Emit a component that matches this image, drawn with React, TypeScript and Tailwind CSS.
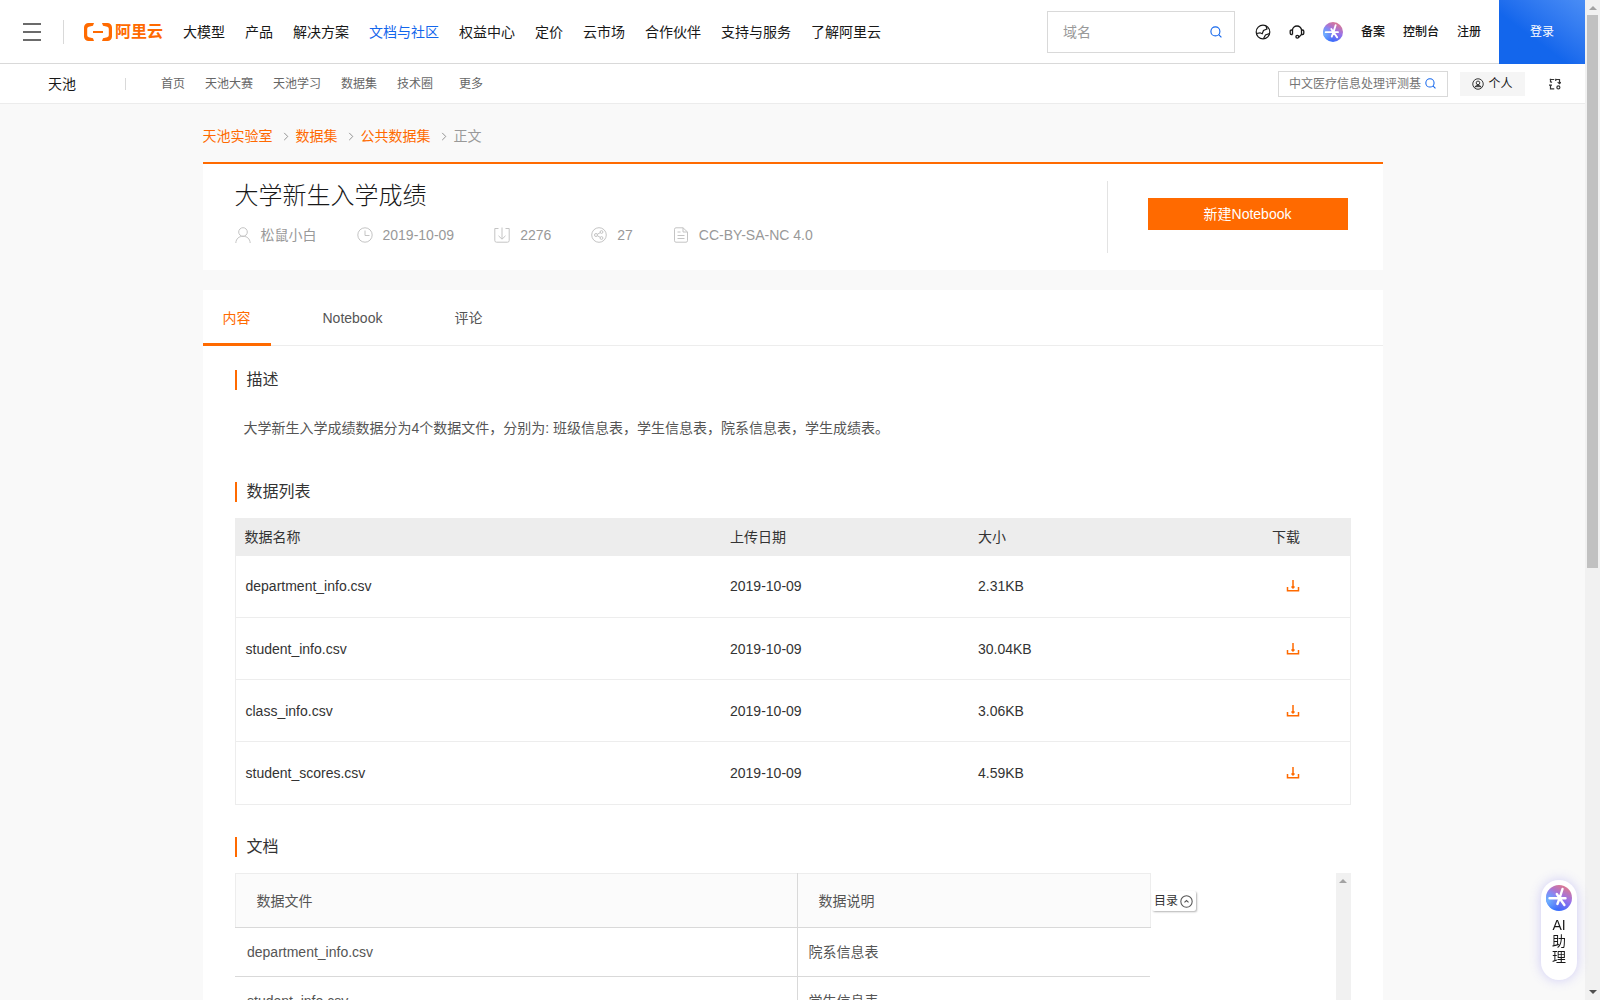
import type { ReactNode, SVGProps } from "react";

interface DataFile {
  name: string;
  date: string;
  size: string;
}

const mainLinks = [
  "大模型",
  "产品",
  "解决方案",
  "文档与社区",
  "权益中心",
  "定价",
  "云市场",
  "合作伙伴",
  "支持与服务",
  "了解阿里云",
];

const subLinks = ["首页", "天池大赛", "天池学习", "数据集", "技术圈"];

const crumbs = ["天池实验室", "数据集", "公共数据集"];

const files: DataFile[] = [
  { name: "department_info.csv", date: "2019-10-09", size: "2.31KB" },
  { name: "student_info.csv", date: "2019-10-09", size: "30.04KB" },
  { name: "class_info.csv", date: "2019-10-09", size: "3.06KB" },
  { name: "student_scores.csv", date: "2019-10-09", size: "4.59KB" },
];

const docs = [
  { file: "department_info.csv", desc: "院系信息表" },
  { file: "student_info.csv", desc: "学生信息表" },
];

function Icon({ children, ...props }: SVGProps<SVGSVGElement>) {
  return (
    <svg
      viewBox="0 0 16 16"
      fill="none"
      stroke="currentColor"
      aria-hidden="true"
      {...props}
    >
      {children}
    </svg>
  );
}

function SearchIcon({ className }: { className: string }) {
  return (
    <Icon className={className} strokeWidth="1.5">
      <circle cx="7.2" cy="7.2" r="6" />
      <path d="M11.6 11.6 15.2 15.2" />
    </Icon>
  );
}

function AiIcon({ id, className }: { id: string; className: string }) {
  return (
    <svg viewBox="0 0 26 26" className={className} aria-hidden="true">
      <defs>
        <linearGradient id={id} x1="0.8" y1="0.05" x2="0.35" y2="1">
          <stop offset="0" stopColor="#e0788a" />
          <stop offset="0.45" stopColor="#9a72e8" />
          <stop offset="1" stopColor="#2b6bff" />
        </linearGradient>
        <radialGradient id={`${id}-glow`} cx="0.05" cy="0.6" r="0.5">
          <stop offset="0" stopColor="#6fb4ff" />
          <stop offset="1" stopColor="#6fb4ff" stopOpacity="0" />
        </radialGradient>
      </defs>
      <circle cx="13" cy="13" r="13" fill={`url(#${id})`} />
      <circle cx="13" cy="13" r="13" fill={`url(#${id}-glow)`} />
      <path
        d="M3.5 13.2H19.5M16.5 4 13.6 13.2 18.4 20M13.6 13.2 10.8 9M13.6 13.2 11.4 19"
        fill="none"
        stroke="#fff"
        strokeWidth="2.4"
        strokeLinecap="round"
      />
    </svg>
  );
}

function Logo() {
  return (
    <a
      href="#home"
      className="flex items-center gap-[3px] text-base leading-5 font-bold text-[#ff6a00]"
    >
      <svg viewBox="0 0 28 18" className="h-[18px] w-7" aria-hidden="true">
        <path
          d="M10 0H4.5A4.5 4.5 0 0 0 0 4.5v9A4.5 4.5 0 0 0 4.5 18H10L9 15.2 4.8 14.2A2 2 0 0 1 3.2 12.3V5.7A2 2 0 0 1 4.8 3.8L9 2.8ZM18 0h5.5A4.5 4.5 0 0 1 28 4.5v9a4.5 4.5 0 0 1-4.5 4.5H18l1-2.8 4.2-1a2 2 0 0 0 1.6-1.9V5.7a2 2 0 0 0-1.6-1.9L19 2.8ZM9 8h10v2H9Z"
          fill="currentColor"
        />
      </svg>
      阿里云
    </a>
  );
}

function TopBar() {
  return (
    <header className="flex h-16 items-center border-b border-[#d9d9d9] bg-white pl-[23px] whitespace-nowrap text-[#181818]">
      <button
        type="button"
        aria-label="菜单"
        className="flex w-[18px] flex-col gap-1.5 text-[#6b6b6b]"
      >
        <span className="h-0.5 bg-current" />
        <span className="h-0.5 bg-current" />
        <span className="h-0.5 bg-current" />
      </button>
      <span className="mr-5 ml-[22px] h-6 w-px bg-[#d9d9d9]" />
      <Logo />
      <nav className="ml-5 flex gap-5 text-sm leading-5">
        {mainLinks.map((link) => (
          <a
            key={link}
            href="#nav"
            className={link === "文档与社区" ? "text-[#1366ec]" : ""}
          >
            {link}
          </a>
        ))}
      </nav>
      <label className="mt-px ml-auto flex h-[42px] w-[188px] items-center border border-[#d9d9d9] pr-3 pl-[15px]">
        <input
          aria-label="搜索"
          placeholder="域名"
          className="min-w-0 flex-1 text-sm leading-5 outline-none placeholder:text-[#999]"
        />
        <SearchIcon className="size-3 text-[#1366ec]" />
      </label>
      <div className="ml-5 flex h-full items-center text-xs leading-4 font-medium">
        <a href="#lang" aria-label="语言">
          <Icon className="size-4" strokeWidth="1.2">
            <circle cx="8" cy="8" r="6.8" />
            <path d="M1.5 9.5 5 8.8 7.2 9.8 8.5 6.5 12 5 11 2M8.5 14.5 10.5 11 14.5 9.5" />
          </Icon>
        </a>
        <a href="#support" aria-label="支持" className="ml-[18px]">
          <Icon className="size-4" strokeWidth="1.3">
            <path d="M3.5 10.5V6.2A4.5 4.2 0 0 1 12.5 6.2V10.5L9.5 13.5M3.5 6H2.5Q1.2 6 1.2 7.2V9.3Q1.2 10.5 2.5 10.5H3.5M12.5 6H13.5Q14.8 6 14.8 7.2V9.3Q14.8 10.5 13.5 10.5H12.5" />
            <circle cx="8.3" cy="12.8" r="1.4" />
          </Icon>
        </a>
        <a href="#ai" aria-label="AI" className="ml-[18px]">
          <AiIcon id="ai-top" className="size-5" />
        </a>
        <a href="#beian" className="ml-[18px]">
          备案
        </a>
        <a href="#console" className="ml-[18px]">
          控制台
        </a>
        <a href="#register" className="ml-[18px]">
          注册
        </a>
        <a
          href="#login"
          className="-mb-px ml-[18px] flex h-16 w-[86px] items-center justify-center bg-linear-to-tr from-[#1366ec] from-40% to-[#4a8df5] font-normal text-white"
        >
          登录
        </a>
      </div>
    </header>
  );
}

function SubBar() {
  return (
    <div className="flex h-10 items-center border-b border-[#ececec] bg-white pr-6 pl-12 text-xs leading-4 whitespace-nowrap text-[#666]">
      <a href="#tianchi" className="text-sm leading-5 text-[#181818]">
        天池
      </a>
      <span className="mr-[35px] ml-[49px] h-3 w-px bg-[#d9d9d9]" />
      <nav className="flex gap-5">
        {subLinks.map((link) => (
          <a key={link} href="#sub">
            {link}
          </a>
        ))}
        <a href="#more" className="ml-1.5">
          更多
        </a>
      </nav>
      <label className="ml-auto flex h-[26px] w-[170px] items-center gap-1 border border-[#d9d9d9] pr-[11px] pl-2.5">
        <input
          aria-label="站内搜索"
          placeholder="中文医疗信息处理评测基准"
          className="min-w-0 flex-1 outline-none placeholder:text-[#757575]"
        />
        <SearchIcon className="size-[11px] text-[#1366ec]" />
      </label>
      <button
        type="button"
        className="ml-3 flex h-6 w-[65px] items-center justify-center gap-1 bg-[#f5f5f5] text-[#181818]"
      >
        <Icon className="size-3 text-[#333]" strokeWidth="1.3">
          <circle cx="8" cy="8" r="7" />
          <circle cx="8" cy="6.5" r="2.4" />
          <path d="M3.5 13Q4 9.8 8 9.8T12.5 13M4 11.5H12" />
        </Icon>
        个人
      </button>
      <button type="button" aria-label="切换" className="ml-6">
        <Icon className="size-3 text-[#333]" strokeWidth="1.6">
          <path d="M2 1V6M1 2H7M2 9V14.500H7M0 9.500H4M9 2H14V7M11.500 5.500 14 7.500 16 5.500M9 1V4M4 6 2 4.500" />
          <circle cx="12.5" cy="12.5" r="2" />
        </Icon>
      </button>
    </div>
  );
}

function Breadcrumb() {
  return (
    <nav className="flex h-[58px] items-center pt-1.5 text-sm leading-5 text-[#ff6a00]">
      {crumbs.map((crumb) => (
        <span key={crumb} className="flex items-center">
          <a href="#crumb">{crumb}</a>
          <Icon
            viewBox="0 0 6 10"
            className="mr-[7px] ml-2.5 h-[9px] w-1.5 text-[#888]"
          >
            <path d="M1 1 5 5 1 9" />
          </Icon>
        </span>
      ))}
      <span className="text-[#999]">正文</span>
    </nav>
  );
}

function Meta({ icon, children }: { icon: ReactNode; children: ReactNode }) {
  return (
    <li className="flex items-center gap-2.5">
      <Icon className="size-4 text-[#c4c4c4]">{icon}</Icon>
      {children}
    </li>
  );
}

function Summary() {
  return (
    <section className="flex items-start border-t-2 border-[#ff6a00] bg-white px-8 py-[17px]">
      <div className="flex-1">
        <h1 className="text-2xl leading-[30px] font-light text-[#181818]">
          大学新生入学成绩
        </h1>
        <ul className="mt-3.5 flex gap-10 text-sm leading-5 text-[#999]">
          <Meta
            icon={
              <>
                <circle cx="8" cy="5" r="4.3" />
                <path d="M.8 16C1.2 11.5 4 9.3 8 9.3S14.8 11.5 15.2 16" />
              </>
            }
          >
            松鼠小白
          </Meta>
          <Meta
            icon={
              <>
                <circle cx="8" cy="8" r="7.2" />
                <path d="M8 3.5V8.5H12.5" />
              </>
            }
          >
            2019-10-09
          </Meta>
          <Meta
            icon={
              <path d="M4.5 1.5H.8V13.5Q.8 15.2 2.5 15.2H13.5Q15.2 15.2 15.2 13.5V1.5H11.5M8 .5V12M4.5 8.8 8 12.2 11.5 8.8" />
            }
          >
            2276
          </Meta>
          <Meta
            icon={
              <>
                <circle cx="8" cy="8" r="7.3" />
                <circle cx="5" cy="8" r="1.5" />
                <circle cx="10.5" cy="5" r="1.4" />
                <circle cx="10.5" cy="11" r="1.4" />
                <path d="M6.3 7.3 9.3 5.6M6.3 8.7 9.3 10.4" />
              </>
            }
          >
            27
          </Meta>
          <Meta
            icon={
              <path d="M10 .8H3Q1.5.8 1.5 2.3V13.7Q1.5 15.2 3 15.2H13Q14.5 15.2 14.5 13.7V5ZM10 .8V5H14.5M4.5 5H7.5M4.5 8.5H11.5M4.5 11.5H11.5" />
            }
          >
            CC-BY-SA-NC 4.0
          </Meta>
        </ul>
      </div>
      <div className="flex h-[72px] items-start border-l border-[#e3e3e3] pt-[17px] pr-[3px] pl-10">
        <button
          type="button"
          className="h-8 w-[200px] bg-[#ff6a00] text-sm leading-5 text-white"
        >
          新建Notebook
        </button>
      </div>
    </section>
  );
}

function SectionTitle({ children }: { children: ReactNode }) {
  return (
    <h2 className="border-l-2 border-[#ff6a00] pl-2.5 text-base leading-5 text-[#333]">
      {children}
    </h2>
  );
}

function FileTable() {
  return (
    <table className="mt-4 w-full table-fixed border border-[#ededed] text-left text-sm leading-5 text-[#333]">
      <colgroup>
        <col className="w-[485px]" />
        <col className="w-[248px]" />
        <col />
        <col className="w-[87px]" />
      </colgroup>
      <thead>
        <tr className="h-[37px] bg-[#ededed]">
          <th className="pl-[9px] font-normal">数据名称</th>
          <th className="pl-2.5 font-normal">上传日期</th>
          <th className="pl-2.5 font-normal">大小</th>
          <th className="pl-[9px] font-normal">下载</th>
        </tr>
      </thead>
      <tbody>
        {files.map((file) => (
          <tr
            key={file.name}
            className="h-[62px] border-b border-[#ededed] last:h-[63px]"
          >
            <td className="pl-2.5">{file.name}</td>
            <td className="pl-2.5">{file.date}</td>
            <td className="pl-2.5">{file.size}</td>
            <td className="pl-[23px]">
              <a
                href="#download"
                aria-label={`下载 ${file.name}`}
                className="block w-3.5 text-[#ff6a00]"
              >
                <Icon viewBox="0 0 14 14" className="size-3.5" strokeWidth="1.5">
                  <path d="M1.5 8V11.8H12.5V8M7 1V8.5M5.5 7.5 7 9 8.5 7.5" />
                </Icon>
              </a>
            </td>
          </tr>
        ))}
      </tbody>
    </table>
  );
}

function DocPanel() {
  return (
    <div className="mt-4 flex h-96">
      <div className="flex min-w-0 flex-1 items-start">
        <table className="w-[916px] table-fixed text-left text-sm leading-5 text-[#555]">
          <colgroup>
            <col className="w-[562px]" />
            <col />
          </colgroup>
          <thead>
            <tr className="h-[54px] border border-[#ededed] border-b-[#d9d9d9] bg-[#fbfbfb]">
              <th className="border-r border-[#d9d9d9] pl-[21px] font-normal">
                数据文件
              </th>
              <th className="pl-[21px] font-normal">数据说明</th>
            </tr>
          </thead>
          <tbody>
            {docs.map((doc) => (
              <tr key={doc.file} className="h-[49px] border-b border-[#d9d9d9]">
                <td className="border-r border-[#d9d9d9] pl-3">{doc.file}</td>
                <td className="pl-[11px]">{doc.desc}</td>
              </tr>
            ))}
          </tbody>
        </table>
        <button
          type="button"
          className="mt-[18px] ml-px flex h-5 w-11 items-center justify-center gap-0.5 rounded-xs bg-white text-xs leading-4 whitespace-nowrap text-[#333] shadow-[1px_1px_2px_rgba(0,0,0,0.3)]"
        >
          目录
          <Icon className="size-[13px] shrink-0 text-[#555]" strokeWidth="1.3">
            <circle cx="8" cy="8" r="7" />
            <path d="M5.5 9.2 8 6.8 10.5 9.2" />
          </Icon>
        </button>
      </div>
      <div className="flex w-[15px] flex-col items-center bg-[#f1f1f1] pt-1.5">
        <ScrollArrow className="text-[#a3a3a3]" />
      </div>
    </div>
  );
}

function ScrollArrow({ className }: { className: string }) {
  return (
    <svg
      viewBox="0 0 8 4"
      className={`h-1 w-2 ${className}`}
      fill="currentColor"
      aria-hidden="true"
    >
      <path d="M4 0 8 4H0Z" />
    </svg>
  );
}

function Details() {
  return (
    <section className="mt-5 bg-white">
      <div className="flex h-14 gap-8 border-b border-[#ededed] text-sm leading-5 text-[#555]">
        <button
          type="button"
          className="-mb-px border-b-3 border-[#ff6a00] px-5 pt-0.5 text-[#ff6a00]"
        >
          内容
        </button>
        <button type="button" className="px-5">
          Notebook
        </button>
        <button type="button" className="px-5">
          评论
        </button>
      </div>
      <div className="px-8 pt-6">
        <SectionTitle>描述</SectionTitle>
        <p className="mt-7 mb-11 pl-[9px] text-sm leading-5 text-[#555]">
          大学新生入学成绩数据分为4个数据文件，分别为:
          班级信息表，学生信息表，院系信息表，学生成绩表。
        </p>
        <SectionTitle>数据列表</SectionTitle>
        <FileTable />
        <div className="mt-8">
          <SectionTitle>文档</SectionTitle>
        </div>
        <DocPanel />
      </div>
    </section>
  );
}

export default function App() {
  return (
    <div className="flex h-screen bg-[#f9f9f9] font-['Liberation_Sans','Noto_Sans_CJK_SC',sans-serif]">
      <div className="min-w-0 flex-1 overflow-y-auto [scrollbar-width:none]">
        <TopBar />
        <SubBar />
        <main className="mx-auto max-w-[1180px]">
          <Breadcrumb />
          <Summary />
          <Details />
        </main>
      </div>
      <div
        aria-hidden="true"
        className="flex w-[15px] flex-col items-center bg-[#f1f1f1] py-1.5"
      >
        <ScrollArrow className="text-[#a3a3a3]" />
        <div className="mt-[5px] h-[56%] w-[11px] bg-[#c1c1c1]" />
        <ScrollArrow className="mt-auto rotate-180 text-[#505050]" />
      </div>
      <button
        type="button"
        className="fixed right-[23px] bottom-5 flex h-[100px] w-9 flex-col items-center rounded-full bg-white pt-[5px] text-sm leading-4 text-[#181818] shadow-[0_0_12px_rgba(110,100,240,0.3)]"
      >
        <AiIcon id="ai-float" className="mb-1.5 size-[26px]" />
        <span>AI</span>
        <span>助</span>
        <span>理</span>
      </button>
    </div>
  );
}
